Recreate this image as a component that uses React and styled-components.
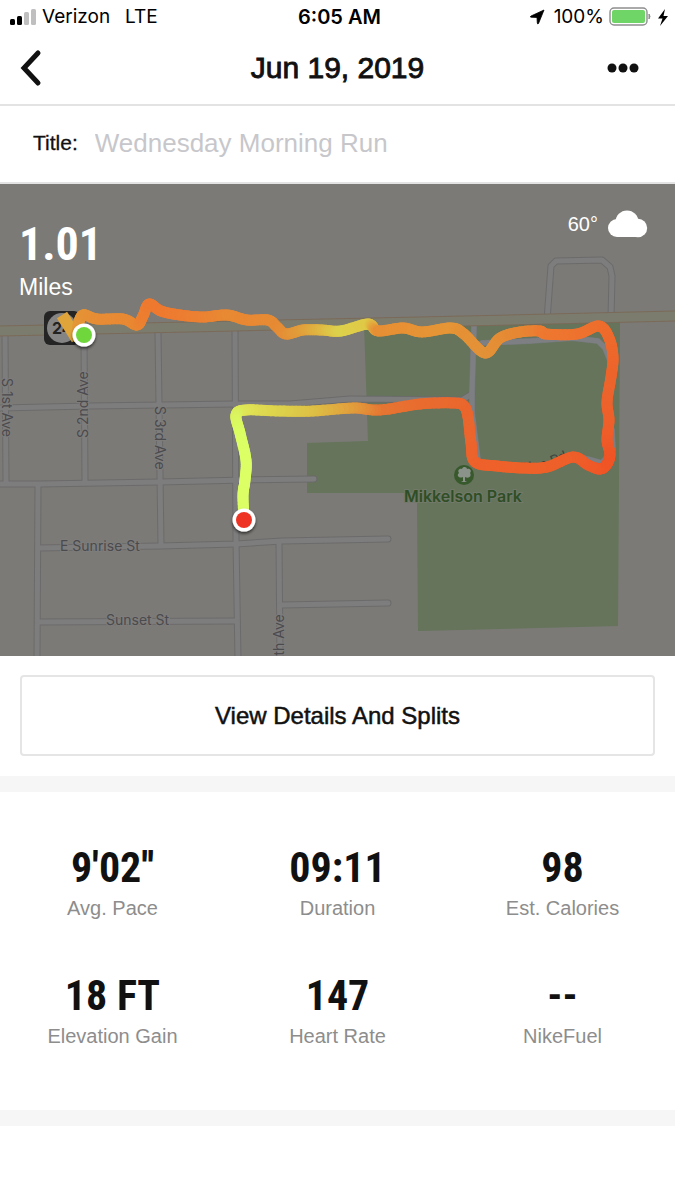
import { useState } from "react";
import styled, { createGlobalStyle } from "styled-components";

const stats = [
  { value: "9'02''", label: "Avg. Pace" },
  { value: "09:11", label: "Duration" },
  { value: "98", label: "Est. Calories" },
  { value: "18 FT", label: "Elevation Gain" },
  { value: "147", label: "Heart Rate" },
  { value: "--", label: "NikeFuel" },
];

const roads = [
  "M5 336 L6 482",
  "M84 336 L85 482",
  "M158 333 L161 545",
  "M235 330 L236 540 L238 660",
  "M38 485 L37 660",
  "M-5 408 L90 406 L235 404 L290 404 L350 399 L462 400 L472 394",
  "M-5 484 L40 484 L160 482 L245 480 L314 479",
  "M38 548 L160 546 L236 544 L282 541 L388 539",
  "M38 622 L236 621",
  "M279 542 L280 660",
  "M281 605 L388 603",
  "M547 320 L551 266 L556 261 L602 260 L610 267 L612 276 L611 318",
];

const parkRoads = [
  "M474 325 L472 393 L472 412 L478 460",
  "M474 346 L482 343 L530 341 L572 338 L598 341 L605 348 L613 368",
  "M612 430 L613 450 L602 463 L572 455",
];

// x, y, pace colour
const route = [
  [77, 337, "#dfa43a"],
  [78, 326, "#e39a37"],
  [83, 315, "#e59336"],
  [97, 319, "#e68d35"],
  [123, 319, "#e88a33"],
  [137, 325, "#e98732"],
  [143, 316, "#ec7f30"],
  [149, 304, "#ee7a2f"],
  [161, 311, "#ee792f"],
  [180, 315, "#ed7c30"],
  [203, 317, "#eb8132"],
  [227, 315, "#e88933"],
  [247, 320, "#e88833"],
  [268, 320, "#e78b34"],
  [277, 327, "#e68a34"],
  [286, 334, "#e48f36"],
  [303, 330, "#e19e3a"],
  [322, 330, "#dfb742"],
  [341, 331, "#ddd14c"],
  [368, 324, "#dfc946"],
  [378, 331, "#e68f35"],
  [403, 328, "#e79034"],
  [422, 332, "#e69335"],
  [451, 328, "#e69636"],
  [464, 334, "#e59035"],
  [485, 353, "#e39238"],
  [500, 338, "#e48d35"],
  [520, 332, "#e68733"],
  [540, 331, "#ec7d31"],
  [546, 334, "#ee7830"],
  [577, 334, "#ee732e"],
  [599, 326, "#ee6e2c"],
  [609, 338, "#ee6a2c"],
  [613, 357, "#ee672b"],
  [611, 377, "#ed642b"],
  [607, 402, "#ed632c"],
  [609, 420, "#ee602a"],
  [607, 440, "#ef5c29"],
  [610, 454, "#ef5626"],
  [607, 464, "#f05425"],
  [600, 469, "#f05526"],
  [588, 465, "#ef5928"],
  [573, 457, "#ee5e29"],
  [547, 467, "#ee6029"],
  [523, 468, "#ee622a"],
  [497, 466, "#ef612a"],
  [475, 462, "#ee612b"],
  [471, 443, "#ec642c"],
  [468, 417, "#ea662d"],
  [464, 406, "#ea662d"],
  [454, 403, "#ea672d"],
  [420, 404, "#e96b2e"],
  [380, 410, "#e67532"],
  [353, 408, "#e19a3b"],
  [313, 411, "#ddbe44"],
  [280, 411, "#ddd04b"],
  [246, 410, "#dfe254"],
  [236, 415, "#daf05c"],
  [240, 433, "#dafd62"],
  [246, 460, "#dbff65"],
  [245, 480, "#dbff65"],
  [243, 495, "#dbff65"],
  [244, 518, "#dbff65"],
];

function mixColor(a, b, t) {
  const channel = (hex, i) => parseInt(hex.slice(1 + i * 2, 3 + i * 2), 16);
  const mixed = [0, 1, 2].map((i) => Math.round(channel(a, i) + (channel(b, i) - channel(a, i)) * t));
  return `rgb(${mixed.join(",")})`;
}

function spline(a, b, c, d, t) {
  return 0.5 * (2 * b + (c - a) * t + (2 * a - 5 * b + 4 * c - d) * t * t + (3 * b - a - 3 * c + d) * t * t * t);
}

function buildRoute(points, steps = 8) {
  const pieces = [];
  for (let i = 0; i < points.length - 1; i++) {
    const p0 = points[Math.max(i - 1, 0)];
    const p1 = points[i];
    const p2 = points[i + 1];
    const p3 = points[Math.min(i + 2, points.length - 1)];
    const at = (t) => [0, 1].map((k) => spline(p0[k], p1[k], p2[k], p3[k], t).toFixed(2));
    for (let s = 0; s < steps; s++) {
      pieces.push({
        from: at(s / steps),
        to: at((s + 1) / steps),
        color: mixColor(p1[2], p2[2], s / steps),
      });
    }
  }
  return pieces;
}

const routePieces = buildRoute(route);

export default function App() {
  const [title, setTitle] = useState("");

  return (
    <Screen>
      <GlobalStyle />
      <StatusBar>
        <StatusGroup>
          <SignalIcon />
          <Carrier>Verizon</Carrier>
          <span>LTE</span>
        </StatusGroup>
        <Clock>6:05 AM</Clock>
        <StatusRight>
          <LocationIcon />
          <span>100%</span>
          <BatteryIcon />
          <BoltIcon />
        </StatusRight>
      </StatusBar>
      <Header>
        <IconButton type="button" aria-label="Back">
          <svg width="22" height="38" viewBox="0 0 22 38" fill="none">
            <path d="M18 4 L4 19 L18 34" stroke="#111" strokeWidth="5" strokeLinecap="round" strokeLinejoin="miter" />
          </svg>
        </IconButton>
        <Heading>Jun 19, 2019</Heading>
        <IconButton type="button" aria-label="More options" $end>
          <svg width="32" height="10" viewBox="0 0 32 10" fill="#111">
            <circle cx="5" cy="5" r="4.5" />
            <circle cx="16" cy="5" r="4.5" />
            <circle cx="27" cy="5" r="4.5" />
          </svg>
        </IconButton>
      </Header>
      <TitleRow>
        <TitleLabel htmlFor="run-title">Title:</TitleLabel>
        <TitleInput
          id="run-title"
          type="text"
          placeholder="Wednesday Morning Run"
          value={title}
          onChange={(e) => setTitle(e.target.value)}
        />
      </TitleRow>
      <MapPanel>
        <RouteMap />
        <Distance>
          <DistanceValue>1.01</DistanceValue>
          <DistanceUnit>Miles</DistanceUnit>
        </Distance>
        <Weather>
          <span>60°</span>
          <CloudIcon />
        </Weather>
      </MapPanel>
      <Actions>
        <DetailsButton type="button">View Details And Splits</DetailsButton>
      </Actions>
      <Stats>
        {stats.map((stat) => (
          <Stat key={stat.label}>
            <StatValue>{stat.value}</StatValue>
            <StatLabel>{stat.label}</StatLabel>
          </Stat>
        ))}
      </Stats>
    </Screen>
  );
}

function RouteMap() {
  return (
    <MapSvg viewBox="0 184 675 472" role="img" aria-label="Route of the run">
      <defs>
        <filter id="pin-shadow" x="-50%" y="-50%" width="200%" height="200%">
          <feDropShadow dx="0" dy="2" stdDeviation="1.5" floodColor="#000" floodOpacity="0.6" />
        </filter>
        <path id="pine-road" d="M521 473 Q545 472 572 457" />
      </defs>
      <rect x="0" y="184" width="675" height="472" fill="#7b7a76" />
      <path
        d="M364 323 L620 318 L618 626 L418 631 L417 493 L307 493 L307 443 L368 441 Z"
        fill="#65745a"
      />
      <g fill="none" strokeLinejoin="round" strokeLinecap="round">
        {roads.map((d) => <path key={d} d={d} stroke="#6c6b6b" strokeWidth="7" />)}
        {parkRoads.map((d) => <path key={d} d={d} stroke="#747979" strokeWidth="6" />)}
        {roads.map((d) => <path key={d} d={d} stroke="#7e7d7e" strokeWidth="5" />)}
        {parkRoads.map((d) => <path key={d} d={d} stroke="#7d7f82" strokeWidth="5" />)}
        <path d="M-5 331 L235 326 L420 322 L680 316" stroke="#7b6a58" strokeWidth="11" />
        <path d="M-5 331 L235 326 L420 322 L680 316" stroke="#7c7c6e" strokeWidth="9" />
      </g>
      <StreetName x="60" y="551">E Sunrise St</StreetName>
      <StreetName x="106" y="625">Sunset St</StreetName>
      <StreetName transform="translate(2 378) rotate(90)">S 1st Ave</StreetName>
      <StreetName transform="translate(88 438) rotate(-90)">S 2nd Ave</StreetName>
      <StreetName transform="translate(155 406) rotate(90)">S 3rd Ave</StreetName>
      <StreetName transform="translate(284 664) rotate(-90)">5th Ave</StreetName>
      <RoadName>
        <textPath href="#pine-road">Pine Rd</textPath>
      </RoadName>
      <circle cx="464" cy="475" r="10" fill="#38592c" />
      <path
        d="M463 481 L463 477 C459 479 456 475 459 473 C457 470 460 468 462 469 C463 466 467 467 467 469 C470 468 472 471 470 473 C472 476 469 479 465 477 L465 481 L467 482 L461 482 Z"
        fill="#8b928a"
      />
      <ParkName x="463" y="502">Mikkelson Park</ParkName>
      <rect x="44" y="311" width="36" height="34" rx="6" fill="#242424" />
      <circle cx="62" cy="328" r="15" fill="#858484" />
      <RouteNumber x="52" y="334">24</RouteNumber>
      <path d="M62 315 L77 339" stroke="#dfa43a" strokeWidth="12" />
      <g strokeWidth="11" strokeLinecap="round">
        {routePieces.map((piece, i) => (
          <line key={i} x1={piece.from[0]} y1={piece.from[1]} x2={piece.to[0]} y2={piece.to[1]} stroke={piece.color} />
        ))}
      </g>
      <circle cx="84" cy="335" r="11.5" fill="#fff" filter="url(#pin-shadow)" />
      <circle cx="84" cy="335" r="8" fill="#6fd63c" />
      <circle cx="244" cy="520" r="11.5" fill="#fff" filter="url(#pin-shadow)" />
      <circle cx="244" cy="520" r="8" fill="#ee3325" />
    </MapSvg>
  );
}

function SignalIcon() {
  return (
    <svg width="28" height="18" viewBox="0 0 28 18">
      <rect x="0" y="11" width="5" height="6" rx="1.5" fill="#000" />
      <rect x="7" y="8" width="5" height="9" rx="1.5" fill="#000" />
      <rect x="14" y="4" width="5" height="13" rx="1.5" fill="#bfbfbf" />
      <rect x="21" y="1" width="5" height="16" rx="1.5" fill="#bfbfbf" />
    </svg>
  );
}

function LocationIcon() {
  return (
    <svg width="16" height="16" viewBox="0 0 16 16">
      <path
        d="M15 1 L9.500 14.500 Q8.500 15.500 8.300 14 L8 8.500 L2 8.200 Q0.500 8 2 7 Z"
        fill="#000"
        stroke="#000"
        strokeWidth="0.8"
        strokeLinejoin="round"
      />
    </svg>
  );
}

function BatteryIcon() {
  return (
    <svg width="43" height="20" viewBox="0 0 43 20">
      <rect x="1" y="1" width="37" height="17" rx="4" fill="none" stroke="#8e8e8e" strokeWidth="1.4" />
      <rect x="3" y="3" width="33" height="13" rx="2" fill="#6ed566" />
      <path d="M40 7 Q42 9.500 40 12 Z" fill="#8e8e8e" stroke="#8e8e8e" />
    </svg>
  );
}

function BoltIcon() {
  return (
    <svg width="12" height="17" viewBox="0 0 12 17">
      <path d="M8 0 L1 9.500 L5.500 9.500 L3 17 L11 7 L6.500 7 Z" fill="#000" />
    </svg>
  );
}

function CloudIcon() {
  return (
    <svg width="40" height="28" viewBox="0 0 40 28" fill="#fff">
      <circle cx="19" cy="12" r="11.500" />
      <circle cx="9" cy="18" r="9" />
      <circle cx="30" cy="18" r="9.200" />
      <rect x="9" y="16" width="21" height="11" />
    </svg>
  );
}

const GlobalStyle = createGlobalStyle`
  * {
    box-sizing: border-box;
  }
  body {
    margin: 0;
    background-color: #fff;
    font-family: "Liberation Sans", Arial, sans-serif;
    color: #111;
  }
  svg {
    display: block;
    flex-shrink: 0;
  }
`;
const Screen = styled.main`
  width: 100%;
  min-height: 100vh;
  background-color: #fff;
`;
const StatusBar = styled.div`
  display: grid;
  grid-template-columns: 1fr auto 1fr;
  align-items: center;
  height: 34px;
  padding: 0 6px 0 10px;
  font-family: Inter, sans-serif;
  font-size: 19px;
  line-height: 24px;
  color: #000;
`;
const StatusGroup = styled.div`
  display: flex;
  align-items: center;
  gap: 4px;
`;
const StatusRight = styled(StatusGroup)`
  justify-content: flex-end;
  gap: 5px;
  svg:first-child {
    margin-right: 4px;
  }
`;
const Carrier = styled.span`
  margin-right: 11px;
`;
const Clock = styled.span`
  font-weight: 600;
  font-size: 20px;
`;
const Header = styled.header`
  display: grid;
  grid-template-columns: 60px 1fr 60px;
  align-items: center;
  height: 72px;
  padding: 0 20px 2px;
  border-bottom: 2px solid #e3e3e3;
`;
const IconButton = styled.button`
  display: flex;
  justify-content: ${(props) => (props.$end ? "flex-end" : "flex-start")};
  padding: ${(props) => (props.$end ? "0 16px 0 0" : "0")};
  border: none;
  background: none;
  cursor: pointer;
`;
const Heading = styled.h1`
  margin: 0;
  text-align: center;
  font-size: 30px;
  font-weight: 400;
  line-height: 36px;
  -webkit-text-stroke: 0.9px #111;
`;
const TitleRow = styled.div`
  display: flex;
  align-items: center;
  gap: 17px;
  height: 78px;
  padding: 0 33px 2px;
  border-bottom: 2px solid #e3e3e3;
`;
const TitleLabel = styled.label`
  font-size: 21px;
  line-height: 28px;
  color: #111;
  -webkit-text-stroke: 0.3px #111;
`;
const TitleInput = styled.input`
  flex: 1;
  min-width: 0;
  padding: 0;
  border: none;
  outline: none;
  font-family: "Liberation Sans", Arial, sans-serif;
  font-size: 26px;
  line-height: 32px;
  color: #111;
  &::placeholder {
    color: #c7c7cb;
    opacity: 1;
  }
`;
const MapPanel = styled.section`
  position: relative;
  background-color: #7b7a76;
  color: #fff;
`;
const MapSvg = styled.svg`
  width: 100%;
  height: auto;
`;
const StreetName = styled.text`
  font-family: Inter, sans-serif;
  font-size: 14px;
  font-weight: 400;
  fill: #4b4a4d;
  stroke: #7e7d7c;
  stroke-width: 2px;
  paint-order: stroke;
`;
const RoadName = styled(StreetName)`
  fill: #3c4440;
  stroke: none;
`;
const ParkName = styled.text`
  font-family: Inter, sans-serif;
  font-size: 16px;
  font-weight: 600;
  text-anchor: middle;
  fill: #2f4e25;
  stroke: #71796a;
  stroke-width: 2px;
  paint-order: stroke;
`;
const RouteNumber = styled.text`
  font-family: Inter, sans-serif;
  font-size: 16px;
  font-weight: 700;
  fill: #222;
`;
const Distance = styled.div`
  position: absolute;
  top: 31px;
  left: 19px;
`;
const DistanceValue = styled.div`
  font-family: "Roboto Condensed", "Liberation Sans Narrow", "Liberation Sans", sans-serif;
  font-size: 46px;
  font-weight: 700;
  line-height: 58px;
`;
const DistanceUnit = styled.div`
  font-size: 23px;
  line-height: 28px;
`;
const Weather = styled.div`
  position: absolute;
  top: 26px;
  right: 27px;
  display: flex;
  align-items: center;
  gap: 10px;
  font-size: 20px;
  line-height: 28px;
`;
const Actions = styled.div`
  padding: 19px 20px 20px;
  border-bottom: 16px solid #f6f6f6;
`;
const DetailsButton = styled.button`
  display: block;
  width: 100%;
  height: 81px;
  border: 2px solid #e5e5e5;
  border-radius: 4px;
  background-color: #fff;
  color: #111;
  font-family: "Liberation Sans", Arial, sans-serif;
  font-size: 24px;
  line-height: 28px;
  -webkit-text-stroke: 0.5px #111;
  cursor: pointer;
`;
const Stats = styled.section`
  display: grid;
  grid-template-columns: repeat(3, 1fr);
  row-gap: 48px;
  padding: 50px 0 60px;
  border-bottom: 16px solid #f6f6f6;
`;
const Stat = styled.div`
  display: flex;
  flex-direction: column;
  align-items: center;
`;
const StatValue = styled.div`
  font-family: "Roboto Condensed", "Liberation Sans Narrow", "Liberation Sans", sans-serif;
  font-size: 42px;
  font-weight: 700;
  line-height: 52px;
`;
const StatLabel = styled.div`
  font-size: 20px;
  line-height: 28px;
  color: #8d8d8d;
`;
